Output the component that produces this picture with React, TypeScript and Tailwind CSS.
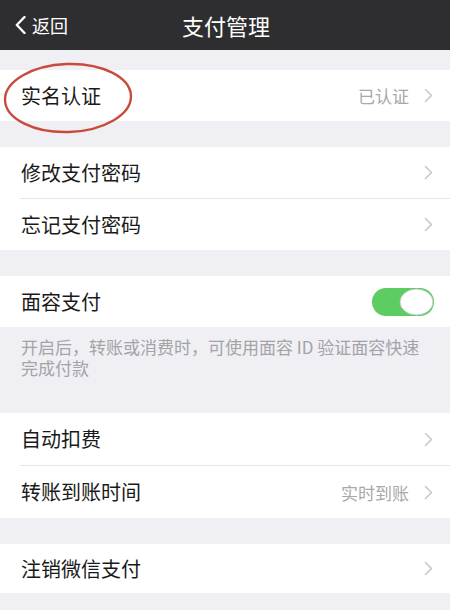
import React from "react";

const font = { fontFamily: '"Noto Sans CJK SC", "Noto Sans", sans-serif' };

function Chevron() {
  return (
    <svg width="9" height="15" viewBox="0 0 9 15" className="shrink-0">
      <path d="M1.5 1.5 L7.5 7.5 L1.5 13.5" fill="none" stroke="#c7c7cc" strokeWidth="1.6" strokeLinecap="round" strokeLinejoin="round" />
    </svg>
  );
}

function Row({ label, value, h = "h-[51px]", chevron = true }: { label: string; value?: string; h?: string; chevron?: boolean }) {
  return (
    <div className={`flex items-center bg-white pl-[21px] pr-[17px] ${h}`}>
      <span className="flex-1 text-[20px] text-[#1a1a1a] leading-none">{label}</span>
      {value && <span className="mr-[15px] text-[17px] text-[#a8a8a8] leading-none">{value}</span>}
      {chevron && <Chevron />}
    </div>
  );
}

function Divider() {
  return (
    <div className="bg-white">
      <div className="ml-[20px] h-px bg-[#e6e6e9]" />
    </div>
  );
}

export default function App() {
  return (
    <div className="w-[450px] h-[610px] overflow-hidden bg-[#efeff4]" style={font}>
      <div className="relative flex h-[50px] items-center bg-[#2e2e30]">
        <div className="flex items-center pl-[15px]">
          <svg width="11" height="18" viewBox="0 0 11 18">
            <path d="M9.5 1 L1.8 9 L9.5 17" fill="none" stroke="#ffffff" strokeWidth="2.4" strokeLinecap="round" strokeLinejoin="round" />
          </svg>
          <span className="ml-[6px] text-[18px] text-white leading-none">返回</span>
        </div>
        <div className="absolute inset-0 flex items-center justify-center pointer-events-none">
          <span className="pl-[2px] text-[22px] text-white leading-none">支付管理</span>
        </div>
      </div>

      <div className="h-[20px]" />
      <div className="relative">
        <Row label="实名认证" value="已认证" />
        <svg className="absolute left-0 top-[-8px]" width="140" height="76" viewBox="0 0 140 76">
          <ellipse cx="68" cy="36" rx="63" ry="34" fill="none" stroke="#c94a3b" strokeWidth="2.4" transform="rotate(-2 68 36)" />
        </svg>
      </div>

      <div className="h-[26px]" />
      <Row label="修改支付密码" />
      <Divider />
      <Row label="忘记支付密码" />

      <div className="h-[26px]" />
      <div className="flex h-[51px] items-center bg-white pl-[21px] pr-[15px]">
        <span className="flex-1 text-[20px] text-[#1a1a1a] leading-none">面容支付</span>
        <svg width="64" height="30" viewBox="0 0 64 30">
          <rect x="1" y="1" width="62" height="28" rx="14" fill="#5dcd63" />
          <ellipse cx="45.5" cy="15" rx="16.5" ry="13" fill="#ffffff" stroke="#b9c4b9" strokeWidth="0.8" />
        </svg>
      </div>
      <div className="h-[86px] pl-[21px] pr-[18px] pt-[9px] text-[17px] leading-[21px] text-[#a3a3a8]">
        <div>开启后，转账或消费时，可使用面容 ID 验证面容快速</div>
        <div>完成付款</div>
      </div>

      <Row label="自动扣费" h="h-[52px]" />
      <Divider />
      <Row label="转账到账时间" value="实时到账" h="h-[52px]" />

      <div className="h-[26px]" />
      <Row label="注销微信支付" h="h-[49px]" />
    </div>
  );
}
